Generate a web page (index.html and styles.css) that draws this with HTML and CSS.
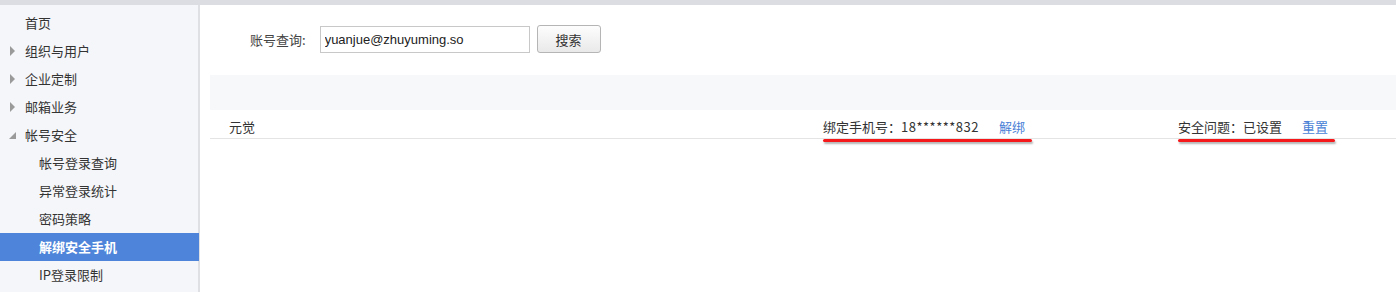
FILE: index.html
```html
<!DOCTYPE html>
<html lang="zh-CN">
  <head>
    <meta charset="UTF-8" />
    <title>帐号安全 - 解绑安全手机</title>
    <link rel="stylesheet" href="styles.css">
  </head>
  <body>
    <div id="top-bar"></div>

    <!-- sidebar + content side by side -->
    <div id="main-container">
      <ul id="side-menu">
        <li class="menu-item"><span class="arrow"></span>首页</li>
        <li class="menu-item"><span class="arrow closed"></span>组织与用户</li>
        <li class="menu-item"><span class="arrow closed"></span>企业定制</li>
        <li class="menu-item"><span class="arrow closed"></span>邮箱业务</li>
        <li class="menu-item"><span class="arrow open"></span>帐号安全</li>
        <li class="menu-item sub">帐号登录查询</li>
        <li class="menu-item sub">异常登录统计</li>
        <li class="menu-item sub">密码策略</li>
        <li class="menu-item sub active">解绑安全手机</li>
        <li class="menu-item sub">IP登录限制</li>
      </ul>

      <div id="content">
        <form id="searchForm">
          <label for="account">账号查询:</label>
          <input type="text" id="account" value="yuanjue@zhuyuming.so" />
          <button type="button">搜索</button>
        </form>

        <div id="table-head"></div>
        <div class="result-row">
          <div class="col-name">元觉</div>
          <div class="col-phone">
            <span class="marked">绑定手机号：<span class="num">18******832</span><span class="action">解绑</span></span>
          </div>
          <div class="col-question">
            <span class="marked">安全问题：已设置<span class="action">重置</span></span>
          </div>
        </div>
      </div>
    </div>
  </body>
</html>
```

FILE: styles.css
```css
body,
html {
  margin: 0;
  padding: 0;
}
body {
  font-family: "Noto Sans CJK SC", "Liberation Sans", sans-serif;
  font-size: 13px;
  color: #333;
  background: #fff;
  height: 292px;
  overflow: hidden;
}
#top-bar {
  height: 5px;
  background-color: #dcdde3;
}
#main-container {
  display: flex;
  flex-direction: row;
  height: 287px;
}
/* left menu */
#side-menu {
  list-style: none;
  margin: 0;
  padding: 4px 0 0 0;
  width: 198px;
  background-color: #f5f6f9;
  border-right: 2px solid #dfe0e4;
  flex-shrink: 0;
}
.menu-item {
  height: 28px;
  line-height: 28px;
  padding-left: 25px;
  position: relative;
  color: #333;
}
.menu-item.sub {
  padding-left: 39px;
}
.menu-item.active {
  background-color: #4e85da;
  color: #fff;
  font-weight: bold;
  margin-right: -1px;
}
.arrow {
  position: absolute;
  left: 10px;
  top: 9px;
  width: 0;
  height: 0;
}
.arrow.closed {
  border-top: 5px solid transparent;
  border-bottom: 5px solid transparent;
  border-left: 5px solid #9a9a9a;
}
.arrow.open {
  left: 9px;
  top: 11px;
  border-left: 7px solid transparent;
  border-bottom: 7px solid #9a9a9a;
}
/* content */
#content {
  flex: 1;
  padding: 20px 0 0 10px;
}
#searchForm {
  display: flex;
  align-items: center;
  height: 28px;
  padding-left: 40px;
}
#searchForm label {
  color: #444;
  margin-right: 14px;
}
#searchForm input {
  box-sizing: border-box;
  border: 1px solid #c8c8c8;
  padding: 0 4px;
  font-family: "Liberation Sans", sans-serif;
  font-size: 13px;
  color: #222;
  margin: 0;
  height: 27px;
  width: 210px;
}
#searchForm button {
  margin-left: 7px;
  width: 64px;
  height: 28px;
  border: 1px solid #b5b5b5;
  border-radius: 3px;
  background: linear-gradient(#fdfdfd, #e9e9e9);
  font-family: "Noto Sans CJK SC", sans-serif;
  font-size: 13px;
  color: #333;
}
#table-head {
  margin-top: 22px;
  height: 35px;
  background-color: #f7f8fa;
}
.result-row {
  display: flex;
  height: 28px;
  line-height: 33px;
  border-bottom: 1px solid #e4e4e4;
}
.col-name {
  padding-left: 19px;
  width: 594px;
}
.col-phone {
  width: 355px;
}
.marked {
  position: relative;
  display: inline-block;
}
.num {
  letter-spacing: 0.5px;
}
.marked::after {
  content: "";
  position: absolute;
  left: 0;
  right: -7px;
  top: 29px;
  height: 3px;
  border-radius: 2px;
  background-color: #f5191b;
  box-shadow: 1px 2px 2px rgba(0, 0, 0, 0.3);
}
.action {
  color: #4a7fd6;
  margin-left: 20px;
  cursor: pointer;
}
```
